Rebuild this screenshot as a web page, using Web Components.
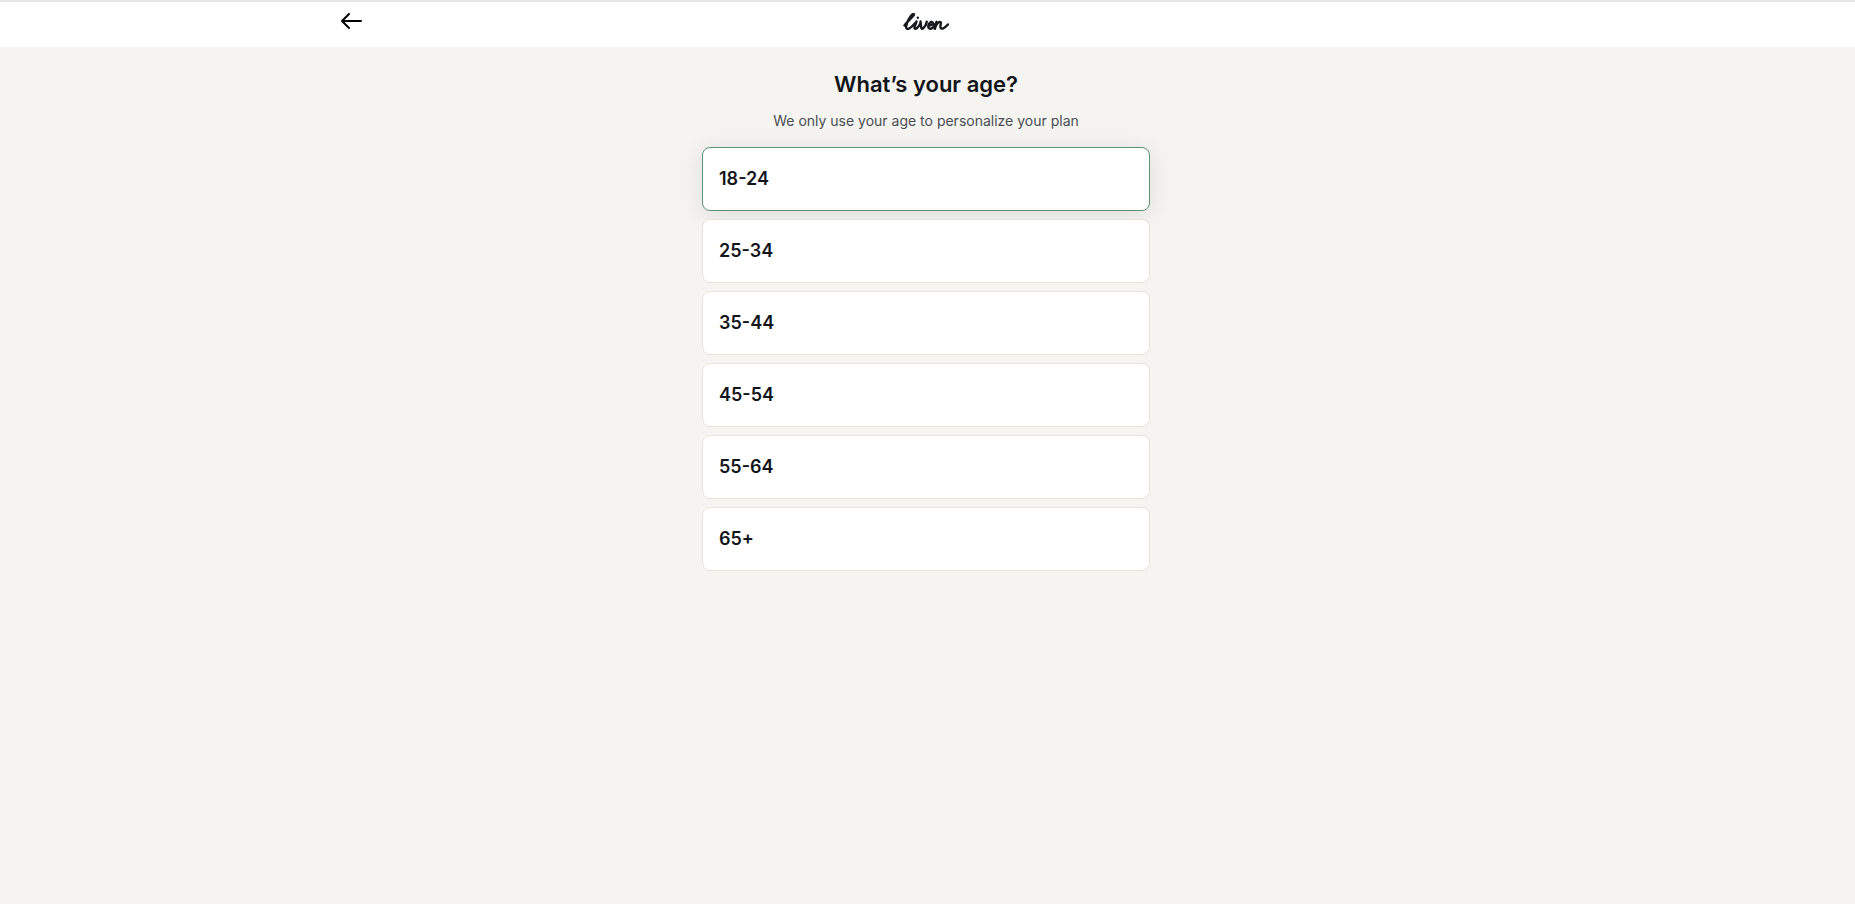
<!DOCTYPE html>
<html lang="en">
<head>
<meta charset="utf-8">
<title>Liven</title>
<style>
  html, body { margin: 0; height: 100%; }
  body { background: #f5f4f0; font-family: Inter, "Liberation Sans", sans-serif; color: #16191e; }
</style>
</head>
<body>
<quiz-page>
  <quiz-header></quiz-header>
  <quiz-question heading="What’s your age?" sub="We only use your age to personalize your plan">
    <quiz-option selected>18-24</quiz-option>
    <quiz-option>25-34</quiz-option>
    <quiz-option>35-44</quiz-option>
    <quiz-option>45-54</quiz-option>
    <quiz-option>55-64</quiz-option>
    <quiz-option>65+</quiz-option>
  </quiz-question>
</quiz-page>

<script>
class QuizPage extends HTMLElement {
  constructor() {
    super();
    this.attachShadow({ mode: 'open' });
    this.shadowRoot.innerHTML = `
      <style>
        :host { display: flex; flex-direction: column; min-height: 904px; }
      </style>
      <slot></slot>
    `;
  }
}

class QuizHeader extends HTMLElement {
  constructor() {
    super();
    this.attachShadow({ mode: 'open' });
    this.shadowRoot.innerHTML = `
      <style>
        :host {
          display: block;
          height: 47px;
          box-sizing: border-box;
          background: #fff;
          border-top: 2px solid #e6e6e6;
          padding-right: 3px;
        }
        .inner {
          width: 1200px;
          margin: 0 auto;
          height: 100%;
          display: grid;
          grid-template-columns: 1fr auto 1fr;
        }
        .back { padding: 10px 0 0 14px; line-height: 0; }
        .logo { padding-top: 11px; line-height: 0; }
      </style>
      <div class="inner">
        <div class="back">
          <svg width="22" height="18" viewBox="0 0 22 18" fill="none" stroke="#000" stroke-width="2" stroke-linecap="round" stroke-linejoin="round">
            <path d="M21 9H2M9 2L2 9l7 7"/>
          </svg>
        </div>
        <div class="logo">
          <svg width="46" height="20" viewBox="0 0 46 20" fill="none" stroke="#16191e" stroke-width="2.400" stroke-linecap="round" stroke-linejoin="round" role="img" aria-label="liven">
            <path d="M1.500 12.500C4 9 8.500 5 10.500 2.500c1-1.300.2-2-1-1.200C7 3 4 9 3.200 13c-.5 2.500 1 3.500 3 2.500 2-1 4-3 6-5.500"/>
            <path d="M13.500 8.500L11.600 14c-.5 1.800.8 2.300 2.200 1.300 1.400-1 2.700-3 3.700-5"/>
            <path d="M14.800 4.800v.01"/>
            <path d="M17.500 8.500c.3 2 .3 4.500.8 6.500.3 1.100 1.200 1 2 .2 1.500-1.500 3-3.500 3.500-6.500"/>
            <path d="M25.500 12.500c2 .2 4.200-.8 4.500-2.200.2-1.300-1.500-1.800-3-.6-2 1.700-2.500 4.800-.7 5.800 2 1 4.700-1.500 6-4.500"/>
            <path d="M33.500 8.800l-1.700 7c1-3 3-6.500 5-6.900 1.700-.3.900 2.500.6 4.300-.3 2 1 3 3 2 1.600-.8 3-2 4.500-3.700"/>
          </svg>
        </div>
      </div>
    `;
  }
}

class QuizQuestion extends HTMLElement {
  constructor() {
    super();
    this.attachShadow({ mode: 'open' });
    this.shadowRoot.innerHTML = `
      <style>
        :host {
          display: flex;
          flex-direction: column;
          align-items: center;
          padding: 23px 3px 0 0;
        }
        h1 {
          margin: 0;
          font-size: 22px;
          line-height: 28px;
          font-weight: 600;
          color: #12151a;
        }
        p {
          margin: 13px 0 0;
          font-size: 14px;
          line-height: 20px;
          color: #4a4d55;
        }
        .list {
          width: 448px;
          margin-top: 16px;
          display: flex;
          flex-direction: column;
          gap: 8px;
        }
      </style>
      <h1></h1>
      <p></p>
      <div class="list"><slot></slot></div>
    `;
    this.shadowRoot.querySelector('h1').textContent = this.getAttribute('heading');
    this.shadowRoot.querySelector('p').textContent = this.getAttribute('sub');
  }
}

class QuizOption extends HTMLElement {
  constructor() {
    super();
    this.attachShadow({ mode: 'open' });
    this.shadowRoot.innerHTML = `
      <style>
        :host {
          display: flex;
          align-items: center;
          height: 64px;
          box-sizing: border-box;
          padding: 0 16px 1px;
          background: #fff;
          border: 1px solid #e9e4d8;
          border-radius: 8px;
          font-size: 18px;
          font-weight: 600;
          color: #12151a;
        }
        :host([selected]) {
          border-color: #5f9270;
          box-shadow: 0 4px 24px rgba(22, 25, 30, 0.1);
        }
      </style>
      <slot></slot>
    `;
  }
}

customElements.define('quiz-page', QuizPage);
customElements.define('quiz-header', QuizHeader);
customElements.define('quiz-question', QuizQuestion);
customElements.define('quiz-option', QuizOption);
</script>
</body>
</html>
